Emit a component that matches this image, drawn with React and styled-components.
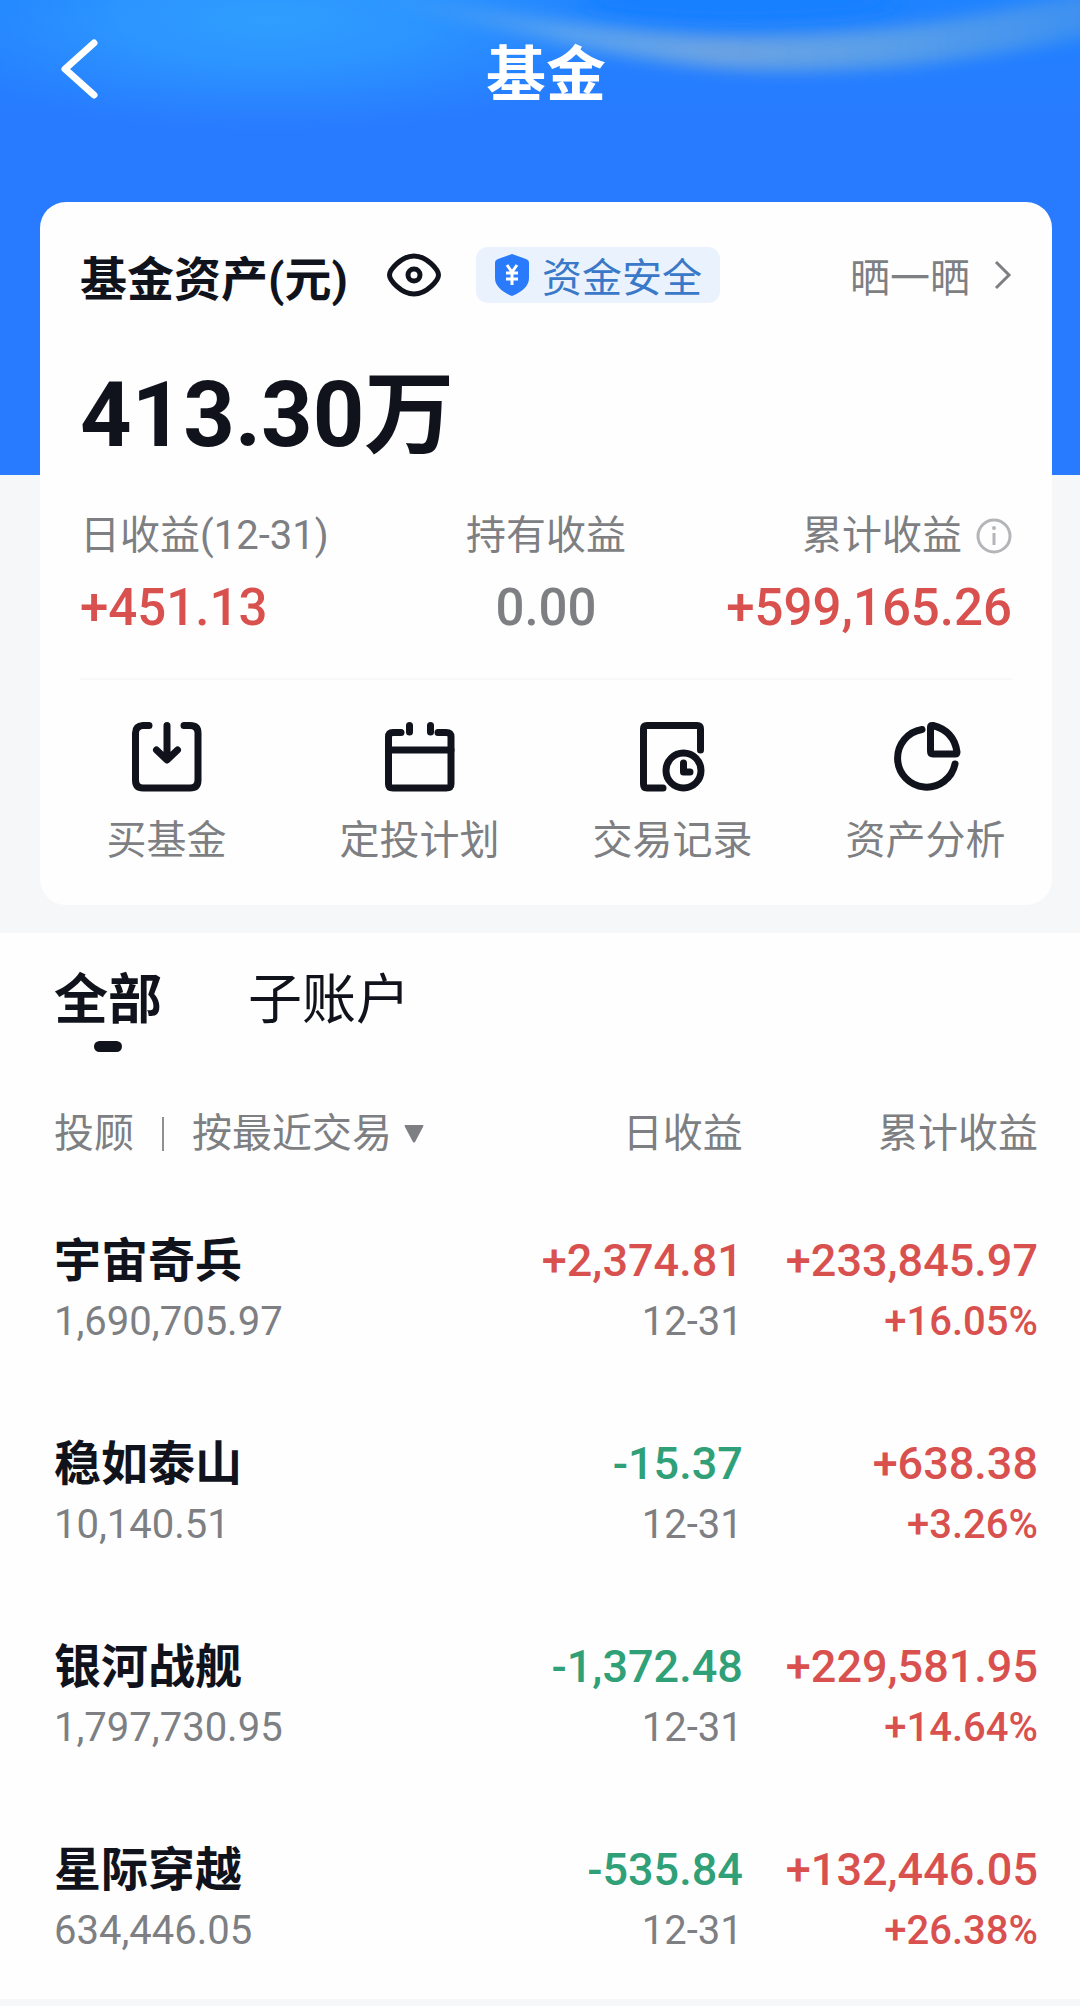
import React, { useState } from 'react'
import styled, { createGlobalStyle } from 'styled-components'

const actions = [
    { name: '买基金', icon: 'buy' },
    { name: '定投计划', icon: 'plan' },
    { name: '交易记录', icon: 'record' },
    { name: '资产分析', icon: 'analysis' },
]

const accounts = [
    { name: '宇宙奇兵', amount: '1,690,705.97', day: '+2,374.81', date: '12-31', total: '+233,845.97', rate: '+16.05%' },
    { name: '稳如泰山', amount: '10,140.51', day: '-15.37', date: '12-31', total: '+638.38', rate: '+3.26%' },
    { name: '银河战舰', amount: '1,797,730.95', day: '-1,372.48', date: '12-31', total: '+229,581.95', rate: '+14.64%' },
    { name: '星际穿越', amount: '634,446.05', day: '-535.84', date: '12-31', total: '+132,446.05', rate: '+26.38%' },
]

const tabs = ['全部', '子账户']

const trend = (value) => (value.startsWith('-') ? '#2fa077' : '#d9514f')

const ActionIcon = ({ name }) => (
    <svg width="72" height="72" viewBox="0 0 72 72" fill="none" stroke="#11131c" strokeWidth="7" strokeLinecap="round" strokeLinejoin="round" aria-hidden="true">
        {name === 'buy' && (
            <>
                <path d="M18 4.500H12Q4.500 5 4.500 12V59Q4.500 67 12 67H59Q67 67 67 59V12Q67 4.500 59 4.500H53" />
                <path d="M36 4.500V38M25.500 29L36 39L46.500 29" />
            </>
        )}
        {name === 'plan' && (
            <>
                <path d="M17 11.500H9Q4.500 11.500 4.500 16V63Q4.500 67 9 67H62Q67 67 67 63V16Q67 11.500 62 11.500H54" />
                <path d="M5 29H67" />
                <path d="M25.500 4.500V11M46.500 4.500V11" />
            </>
        )}
        {name === 'record' && (
            <>
                <path d="M63.500 29V8Q63.500 4.500 60 4.500H10Q6.500 4.500 6.500 8V63Q6.500 67 10 67H26" />
                <circle cx="46.500" cy="49.500" r="17.500" />
                <path d="M46.500 42V51H53" />
            </>
        )}
        {name === 'analysis' && (
            <>
                <path d="M32 8.500A29 29 0 1 0 65 43" />
                <path d="M40.500 6Q40.500 4 43 4.500Q64 10 67 31Q67 33 65 33H43Q40.500 33 40.500 30Z" />
            </>
        )}
    </svg>
)

const App = () => {
    const [tab, setTab] = useState(tabs[0])

    return (
        <Page>
            <GlobalStyle />
            <Hero>
                <HeroLight viewBox="0 0 1080 202" preserveAspectRatio="none" aria-hidden="true">
                    <defs>
                        <filter id="soft" x="-20%" y="-50%" width="140%" height="200%">
                            <feGaussianBlur stdDeviation="8" />
                        </filter>
                        <radialGradient id="glow">
                            <stop offset="0" stopColor="#2f9eff" />
                            <stop offset="0.4" stopColor="#2f9aff" stopOpacity="0.8" />
                            <stop offset="1" stopColor="#2f90ff" stopOpacity="0" />
                        </radialGradient>
                        <linearGradient id="beam">
                            <stop offset="0" stopColor="#3f9cf8" stopOpacity="0" />
                            <stop offset="0.3" stopColor="#58a2f0" />
                            <stop offset="0.5" stopColor="#6ca3e2" />
                            <stop offset="0.7" stopColor="#5a9fe8" />
                            <stop offset="1" stopColor="#3a8ff2" />
                        </linearGradient>
                    </defs>
                    <ellipse cx="270" cy="20" rx="380" ry="112" fill="url(#glow)" />
                    <ellipse cx="740" cy="2" rx="160" ry="18" fill="#1480ff" filter="url(#soft)" />
                    <path d="M330 -12C470 4 600 34 740 36C880 36 990 16 1110 -14V30C980 62 860 74 750 70C620 64 500 28 330 -12Z" fill="url(#beam)" filter="url(#soft)" />
                </HeroLight>
                <Header>
                    <BackButton aria-label="返回">
                        <svg width="40" height="60" viewBox="0 0 40 60" fill="none" stroke="#fff" strokeWidth="7" strokeLinecap="round" strokeLinejoin="round">
                            <path d="M34 4L5 30L34 56" />
                        </svg>
                    </BackButton>
                    <Title>基金</Title>
                </Header>
                <Card>
                    <CardTop>
                        <CardTitle>基金资产(元)</CardTitle>
                        <EyeButton aria-label="隐藏金额">
                            <svg width="56" height="44" viewBox="0 0 56 44" fill="none" stroke="#11131c" strokeWidth="5">
                                <path d="M3.500 22C3.500 17 15 3 28 3S52.500 17 52.500 22S41 41 28 41S3.500 27 3.500 22Z" />
                                <circle cx="28" cy="22" r="6" />
                            </svg>
                        </EyeButton>
                        <SafeBadge href="#safe">
                            <svg width="36" height="42" viewBox="0 0 36 42" aria-hidden="true">
                                <path d="M18 0L32 5Q35 6 35 9V24Q35 35 18 42Q1 35 1 24V9Q1 6 4 5Z" fill="#2a7bfb" />
                                <path d="M13 11L18 18L23 11M12 19H24M12 25H24M18 18V31" fill="none" stroke="#fff" strokeWidth="3" />
                            </svg>
                            资金安全
                        </SafeBadge>
                        <ShareLink href="#share">
                            晒一晒
                            <svg width="18" height="30" viewBox="0 0 18 30" fill="none" stroke="#7d7f83" strokeWidth="3" aria-hidden="true">
                                <path d="M2 2L15 15L2 28" />
                            </svg>
                        </ShareLink>
                    </CardTop>
                    <Balance>413.30万</Balance>
                    <Stats>
                        <Stat $align="flex-start">
                            <StatLabel>日收益(12-31)</StatLabel>
                            <StatValue $color="#d9514f">+451.13</StatValue>
                        </Stat>
                        <Stat $align="center">
                            <StatLabel>持有收益</StatLabel>
                            <StatValue $color="#7d7f83">0.00</StatValue>
                        </Stat>
                        <Stat $align="flex-end">
                            <StatLabel>
                                累计收益
                                <svg width="36" height="36" viewBox="0 0 36 36" fill="none" stroke="#b4b5b8" strokeWidth="3" aria-hidden="true">
                                    <circle cx="18" cy="18" r="16" />
                                    <path d="M18 15V27" />
                                    <circle cx="18" cy="10" r="2" fill="#b4b5b8" stroke="none" />
                                </svg>
                            </StatLabel>
                            <StatValue $color="#d9514f">+599,165.26</StatValue>
                        </Stat>
                    </Stats>
                    <Actions>
                        {actions.map((action) => (
                            <ActionButton key={action.name}>
                                <ActionIcon name={action.icon} />
                                {action.name}
                            </ActionButton>
                        ))}
                    </Actions>
                </Card>
            </Hero>
            <Tabs>
                {tabs.map((name) => (
                    <Tab key={name} $active={tab === name} onClick={() => setTab(name)}>
                        {name}
                    </Tab>
                ))}
            </Tabs>
            <TableWrap>
                <Table>
                    <thead>
                        <tr>
                            <HeadCell>
                                <Filters>
                                    <FilterButton>投顾</FilterButton>
                                    <Separator />
                                    <FilterButton>
                                        按最近交易
                                        <svg width="20" height="18" viewBox="0 0 20 18" aria-hidden="true">
                                            <path d="M1 0H19Q20 0 19 2L11 17Q10 18 9 17L1 2Q0 0 1 0Z" fill="#7d7f83" />
                                        </svg>
                                    </FilterButton>
                                </Filters>
                            </HeadCell>
                            <HeadCell>日收益</HeadCell>
                            <HeadCell>累计收益</HeadCell>
                        </tr>
                    </thead>
                    <tbody>
                        {accounts.map((item) => (
                            <Row key={item.name}>
                                <Cell>
                                    <Name>{item.name}</Name>
                                    <Sub>{item.amount}</Sub>
                                </Cell>
                                <Cell>
                                    <Profit $color={trend(item.day)}>{item.day}</Profit>
                                    <Sub>{item.date}</Sub>
                                </Cell>
                                <Cell>
                                    <Profit $color={trend(item.total)}>{item.total}</Profit>
                                    <Rate $color={trend(item.rate)}>{item.rate}</Rate>
                                </Cell>
                            </Row>
                        ))}
                    </tbody>
                </Table>
            </TableWrap>
            <Footer />
        </Page>
    )
}

export default App

const GlobalStyle = createGlobalStyle`
    * {
        box-sizing: border-box;
    }
    body {
        margin: 0;
        background: #fefefe;
        font-family: Roboto, 'Noto Sans CJK SC', sans-serif;
        color: #11131c;
    }
    svg {
        display: block;
        flex-shrink: 0;
    }
    button, a {
        padding: 0;
        border: none;
        background: none;
        font: inherit;
        color: inherit;
        text-decoration: none;
        cursor: pointer;
    }
`

const Page = styled.div`
    overflow: hidden;
`
const Hero = styled.section`
    position: relative;
    padding: 0 28px 28px 40px;
    background: linear-gradient(#1f83ff 0, #287bff 120px, #287bff 475px, #f6f7f9 475px);
`
const HeroLight = styled.svg`
    position: absolute;
    top: 0;
    left: 0;
    width: 100%;
    height: 202px;
`
const Header = styled.header`
    position: relative;
    display: grid;
    grid-template-columns: 1fr auto 1fr;
    align-items: center;
    height: 202px;
    padding: 0 20px 64px;
`
const BackButton = styled.button`
    justify-self: start;
`
const Title = styled.h1`
    margin: 0;
    font-size: 60px;
    font-weight: 700;
    color: #fff;
`
const Card = styled.div`
    position: relative;
    padding: 38px 40px 34px;
    border-radius: 26px;
    background: #fefefe;
`
const CardTop = styled.div`
    display: flex;
    align-items: center;
    height: 70px;
`
const CardTitle = styled.h2`
    margin: 0;
    font-size: 47px;
    font-weight: 700;
`
const EyeButton = styled.button`
    margin: 0 34px 0 38px;
`
const SafeBadge = styled.a`
    display: flex;
    align-items: center;
    gap: 12px;
    height: 56px;
    padding: 0 18px;
    border-radius: 12px;
    background: #eaf2fe;
    font-size: 40px;
    color: #3a78c8;
`
const ShareLink = styled.a`
    display: flex;
    align-items: center;
    gap: 24px;
    margin-left: auto;
    font-size: 40px;
    color: #7d7f83;
`
const Balance = styled.div`
    margin-top: 54px;
    font-size: 90px;
    line-height: 104px;
    font-weight: 700;
`
const Stats = styled.div`
    display: grid;
    grid-template-columns: 1fr auto 1fr;
    margin-top: 38px;
    padding-bottom: 36px;
    border-bottom: 2px solid #f8f8f9;
`
const Stat = styled.div`
    display: flex;
    flex-direction: column;
    align-items: ${(props) => props.$align};
`
const StatLabel = styled.div`
    display: flex;
    align-items: center;
    gap: 14px;
    font-size: 40px;
    line-height: 60px;
    color: #7d7f83;
`
const StatValue = styled.div`
    margin-top: 8px;
    font-size: 51px;
    line-height: 68px;
    font-weight: 500;
    color: ${(props) => props.$color};
`
const Actions = styled.div`
    display: flex;
    margin: 0 -40px;
    padding-top: 41px;
`
const ActionButton = styled.button`
    display: flex;
    flex: 1;
    flex-direction: column;
    align-items: center;
    gap: 18px;
    font-size: 40px;
    line-height: 60px;
    color: #7d7f83;
`
const Tabs = styled.nav`
    display: flex;
    gap: 86px;
    padding: 30px 54px 0;
`
const Tab = styled.button`
    display: flex;
    flex-direction: column;
    align-items: center;
    font-size: 54px;
    line-height: 76px;
    font-weight: ${(props) => (props.$active ? 700 : 400)};
    &::after {
        content: '';
        width: 28px;
        height: 11px;
        margin-top: 2px;
        border-radius: 6px;
        background: ${(props) => (props.$active ? '#11131c' : 'transparent')};
    }
`
const TableWrap = styled.div`
    padding: 46px 42px 0 54px;
`
const Table = styled.table`
    width: 100%;
    border-collapse: collapse;
    table-layout: fixed;
`
const HeadCell = styled.th`
    padding: 0 0 58px;
    font-size: 40px;
    line-height: 72px;
    font-weight: 400;
    text-align: right;
    white-space: nowrap;
    color: #7d7f83;
    &:first-child {
        width: 40%;
        text-align: left;
    }
    &:last-child {
        width: 30%;
    }
`
const Filters = styled.div`
    display: flex;
    align-items: center;
    gap: 28px;
`
const FilterButton = styled.button`
    display: flex;
    align-items: center;
    gap: 12px;
`
const Separator = styled.span`
    width: 2px;
    height: 34px;
    background: #8d8f92;
`
const Cell = styled.td`
    padding: 0 0 81px;
    text-align: right;
    white-space: nowrap;
    &:first-child {
        text-align: left;
    }
`
const Row = styled.tr`
    &:last-child ${Cell} {
        padding-bottom: 40px;
    }
`
const Name = styled.div`
    font-size: 47px;
    line-height: 66px;
    font-weight: 700;
`
const Profit = styled.div`
    font-size: 45px;
    line-height: 66px;
    font-weight: 500;
    color: ${(props) => props.$color};
`
const Sub = styled.div`
    font-size: 40px;
    line-height: 56px;
    color: #7d7f83;
`
const Rate = styled(Sub)`
    font-weight: 500;
    color: ${(props) => props.$color};
`
const Footer = styled.footer`
    height: 10px;
    background: #f6f7f9;
`
